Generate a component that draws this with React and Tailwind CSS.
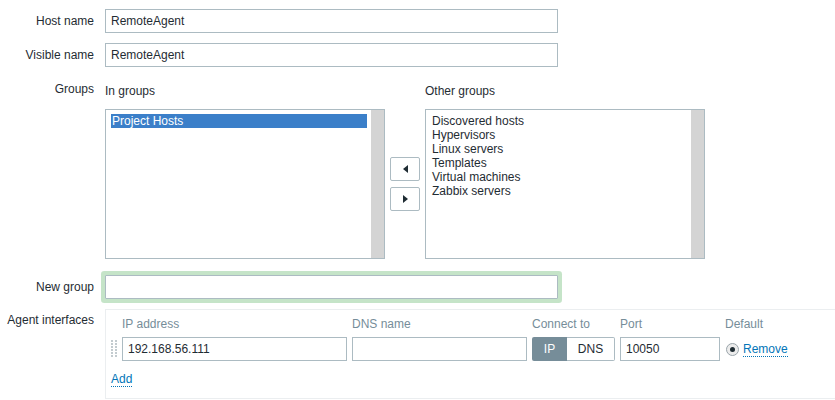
import React from 'react';

const otherGroups = [
  'Discovered hosts',
  'Hypervisors',
  'Linux servers',
  'Templates',
  'Virtual machines',
  'Zabbix servers'
];

const TextInput = ({ value, className = '' }) => (
  <div className={`h-[24px] border border-[#acbbc2] bg-white pl-[5px] flex items-center ${className}`}>
    {value}
  </div>
);

const ListBox = ({ children }) => (
  <div className="w-[280px] h-[150px] border border-[#acbbc2] bg-white flex">
    <div className="flex-1 pl-[5px] pr-[4px] pt-[4px] leading-[14px]">{children}</div>
    <div className="w-[13px] bg-[#d4d4d4]" />
  </div>
);

const DragHandle = () => (
  <svg width="6" height="18" viewBox="0 0 6 18" className="ml-[5px]">
    {[0, 3, 6, 9, 12, 15].map(y => (
      <g key={y} fill="#c3cbcf">
        <rect x="0" y={y} width="2" height="2" />
        <rect x="4" y={y} width="2" height="2" />
      </g>
    ))}
  </svg>
);

const App = () => {
  return (
    <div className="w-[835px] h-[400px] overflow-hidden bg-white text-[12px] leading-[14px] text-[#1f2c33] font-['Liberation_Sans',Arial,sans-serif]">
      <div className="pt-[9px]">
        {/* Host name */}
        <div className="flex items-center">
          <div className="w-[105px] shrink-0 pr-[11px] text-right">Host name</div>
          <TextInput value="RemoteAgent" className="w-[453px]" />
        </div>

        {/* Visible name */}
        <div className="flex items-center mt-[10px]">
          <div className="w-[105px] shrink-0 pr-[11px] text-right">Visible name</div>
          <TextInput value="RemoteAgent" className="w-[453px]" />
        </div>

        {/* Groups */}
        <div className="flex mt-[15px]">
          <div className="w-[105px] shrink-0 pr-[11px] text-right">Groups</div>
          <div className="flex pt-[2px]">
            <div>
              <div className="mb-[11px]">In groups</div>
              <ListBox>
                <div className="bg-[#3b7fc9] text-white pl-[1px]">Project Hosts</div>
              </ListBox>
            </div>
            <div className="self-end h-[150px] flex flex-col justify-center gap-[6px] mx-[5px]">
              <button className="w-[30px] h-[24px] border border-[#acbbc2] rounded-[2px] bg-white flex items-center justify-center">
                <svg width="5" height="8" viewBox="0 0 5 8"><path d="M5 0 L0 4 L5 8 Z" fill="#1f2c33" /></svg>
              </button>
              <button className="w-[30px] h-[24px] border border-[#acbbc2] rounded-[2px] bg-white flex items-center justify-center">
                <svg width="5" height="8" viewBox="0 0 5 8"><path d="M0 0 L5 4 L0 8 Z" fill="#1f2c33" /></svg>
              </button>
            </div>
            <div>
              <div className="mb-[11px]">Other groups</div>
              <ListBox>
                {otherGroups.map(g => (
                  <div key={g} className="pl-[1px]">{g}</div>
                ))}
              </ListBox>
            </div>
          </div>
        </div>

        {/* New group */}
        <div className="flex items-center mt-[16px]">
          <div className="w-[105px] shrink-0 pr-[11px] text-right">New group</div>
          <div className="w-[453px] h-[24px] border border-[#acbbc2] bg-white rounded-[1px] shadow-[0_0_0_4px_#c5e4c8]" />
        </div>

        {/* Agent interfaces */}
        <div className="flex mt-[10px]">
          <div className="w-[105px] shrink-0 pr-[11px] text-right pt-[4px]">Agent interfaces</div>
          <div className="w-[740px] shrink-0 h-[90px] border border-[#ebeef0] pt-[7px]">
            <div className="grid grid-cols-[11px_225px_175px_83px_100px_auto] gap-x-[5px] gap-y-[6px] items-center">
              <div />
              <div className="text-[#768d99]">IP address</div>
              <div className="text-[#768d99]">DNS name</div>
              <div className="text-[#768d99]">Connect to</div>
              <div className="text-[#768d99]">Port</div>
              <div className="text-[#768d99]">Default</div>

              <DragHandle />
              <TextInput value="192.168.56.111" />
              <TextInput value="" />
              <div className="flex h-[24px]">
                <div className="w-[35px] bg-[#768d99] text-white rounded-l-[2px] flex items-center justify-center">IP</div>
                <div className="w-[48px] border border-l-0 border-[#acbbc2] rounded-r-[2px] flex items-center justify-center">DNS</div>
              </div>
              <TextInput value="10050" />
              <div className="flex items-center gap-[4px] pl-[1px]">
                <div className="w-[13px] h-[13px] rounded-full border border-[#9aa5ab] bg-[#ececec] flex items-center justify-center">
                  <div className="w-[5px] h-[5px] rounded-full bg-[#1f2c33]" />
                </div>
                <span className="text-[#0275b8] border-b border-dotted border-[#0275b8]">Remove</span>
              </div>
            </div>
            <div className="pl-[5px] mt-[11px]">
              <span className="text-[#0275b8] border-b border-dotted border-[#0275b8]">Add</span>
            </div>
          </div>
        </div>
      </div>
    </div>
  );
};

export default App;
